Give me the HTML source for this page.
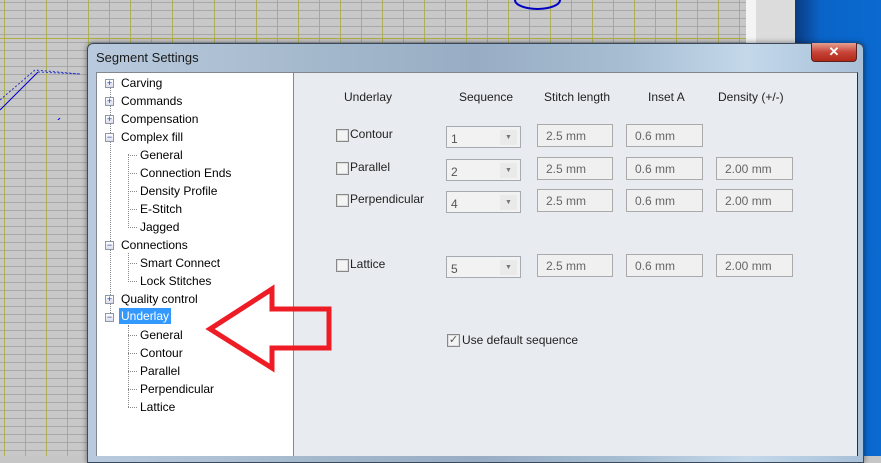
<!DOCTYPE html>
<html><head><style>
*{margin:0;padding:0;box-sizing:border-box}
body{width:881px;height:456px;overflow:hidden;position:relative;font-family:"Liberation Sans",sans-serif;background:#c6c6c6}
.canvas{position:absolute;left:0;top:0;width:746px;height:456px;background-color:#c8c8c8;
background-image:linear-gradient(90deg,rgba(170,170,60,.8) 1px,transparent 1px),linear-gradient(0deg,#a8a8a8 1px,transparent 1px);
background-size:21px 100%,100% 8px;background-position:4px 0,0 3px}
.hl{position:absolute;left:0;width:746px;height:1px;background:#b0b040}
.strip{position:absolute;left:746px;top:0;width:50px;height:456px;background:#dcdcdc;border-left:10px solid #f4f4f4}
.desk{position:absolute;left:795px;top:0;width:86px;height:456px;background:linear-gradient(90deg,#0a3a80,#0a64c8 30%,#0a6ad0)}
.dlg{position:absolute;left:87px;top:43px;width:777px;height:420px;border-radius:6px 6px 0 0;border:1px solid #3a4a5c;
background:linear-gradient(90deg,#b9cade,#a4b8cc 30%,#98adc4 50%,#a8bed2 70%,#c4d8ea 85%,#a8c0d8);box-shadow:0 0 6px rgba(0,0,0,.5)}
.title{position:absolute;left:8px;top:6px;font-size:13px;color:#1a1a1a;font-family:"Liberation Sans",sans-serif}
.close{position:absolute;left:723px;top:-1px;width:46px;height:19px;border:1px solid #5a2020;border-top:none;border-radius:0 0 4px 4px;background:linear-gradient(#e6a090,#c8453a 50%,#b02818);color:#fff;font-weight:bold;font-size:13px;text-align:center;line-height:17px}
.tree{position:absolute;left:96px;top:72px;width:198px;height:384px;background:#fff;border:1px solid #828790;border-bottom:none}
.right{position:absolute;left:294px;top:72px;width:564px;height:384px;background:#e8ebf0;border-top:1px solid #828790;border-right:1px solid #20304a}
.t{position:absolute;font-size:12px;color:#000;white-space:nowrap;line-height:14px}
.pb{position:absolute;width:9px;height:9px;border:1px solid #8a9aa8;background:linear-gradient(#fff,#dde);font-size:9px;line-height:7px;text-align:center;color:#2040a0}
.dv{position:absolute;border-left:1px dotted #888}
.dh{position:absolute;border-top:1px dotted #888;width:9px}
.l{position:absolute;font-size:12px;color:#222;white-space:nowrap}
.cb{position:absolute;width:13px;height:13px;border:1px solid #888;background:#f4f4f4;box-shadow:inset 0 0 0 1px #ddd}
.box{position:absolute;height:23px;border:1px solid #aaa;background:#f0f0f0;font-size:12px;color:#666;padding:4px 0 0 8px}
.combo{position:absolute;height:22px;width:75px;border:1px solid #a6abb3;background:#f2f2f2;font-size:12px;color:#555;padding:5px 0 0 4px}
.combo i{position:absolute;right:3px;top:3px;width:17px;height:15px;background:#eaeaea;font-style:normal;font-size:7px;color:#777;text-align:center;line-height:15px}
</style></head><body>
<div class="canvas"></div>
<div class="hl" style="top:38px"></div>
<div class="strip"></div>
<div class="desk"></div>
<svg style="position:absolute;left:0;top:0" width="746" height="120"><path d="M0 178 L60 118" stroke="#00f"/><path d="M0 100 L35 70 L80 74" stroke="#2030c0" fill="none" stroke-dasharray="2 2"/><path d="M515 0 A20 8 0 0 0 560 0" stroke="#0000c0" stroke-width="2" fill="none"/></svg>
<svg style="position:absolute;left:0;top:60px" width="90" height="60"><path d="M0 50 L38 12" stroke="#0000d0"/><path d="M38 12 L80 14" stroke="#3040d0" stroke-dasharray="2 2"/></svg>
<div class="dlg"><div class="title">Segment Settings</div><div class="close">✕</div></div>
<div class="tree">
<div class="dv" style="left:13px;top:13px;height:231px"></div>
<div class="dv" style="left:31px;top:81px;height:72px"></div>
<div class="dv" style="left:31px;top:180px;height:27px"></div>
<div class="dv" style="left:31px;top:252px;height:82px"></div>
</div>
<div class="right"></div>
<div id="tr"></div>
<svg style="position:absolute;left:200px;top:283px" width="140" height="95"><polygon points="10,46 72,6 72,26 129,26 129,65 72,65 72,85" fill="none" stroke="#ee1c24" stroke-width="5" stroke-linejoin="miter"/></svg>
<div class="l" style="left:344px;top:90px">Underlay</div>
<div class="l" style="left:459px;top:90px">Sequence</div>
<div class="l" style="left:544px;top:90px">Stitch length</div>
<div class="l" style="left:648px;top:90px">Inset A</div>
<div class="l" style="left:718px;top:90px">Density (+/-)</div>
<div class="cb" style="left:336px;top:129px"></div><div class="l" style="left:350px;top:127px">Contour</div>
<div class="cb" style="left:336px;top:162px"></div><div class="l" style="left:350px;top:160px">Parallel</div>
<div class="cb" style="left:336px;top:194px"></div><div class="l" style="left:350px;top:192px">Perpendicular</div>
<div class="cb" style="left:336px;top:259px"></div><div class="l" style="left:350px;top:257px">Lattice</div>
<div class="combo" style="left:446px;top:126px">1<i>▼</i></div>
<div class="combo" style="left:446px;top:159px">2<i>▼</i></div>
<div class="combo" style="left:446px;top:191px">4<i>▼</i></div>
<div class="combo" style="left:446px;top:256px">5<i>▼</i></div>
<div class="box" style="left:537px;top:124px;width:76px">2.5 mm</div>
<div class="box" style="left:537px;top:157px;width:76px">2.5 mm</div>
<div class="box" style="left:537px;top:189px;width:76px">2.5 mm</div>
<div class="box" style="left:537px;top:254px;width:76px">2.5 mm</div>
<div class="box" style="left:626px;top:124px;width:77px">0.6 mm</div>
<div class="box" style="left:626px;top:157px;width:77px">0.6 mm</div>
<div class="box" style="left:626px;top:189px;width:77px">0.6 mm</div>
<div class="box" style="left:626px;top:254px;width:77px">0.6 mm</div>
<div class="box" style="left:716px;top:157px;width:77px">2.00 mm</div>
<div class="box" style="left:716px;top:189px;width:77px">2.00 mm</div>
<div class="box" style="left:716px;top:254px;width:77px">2.00 mm</div>
<div class="cb" style="left:447px;top:334px;font-size:11px;line-height:11px;color:#555;text-align:center">✓</div><div class="l" style="left:462px;top:333px">Use default sequence</div>
<div class="pb" style="left:105px;top:79px">+</div><div class="t" style="left:121px;top:76px">Carving</div>
<div class="pb" style="left:105px;top:97px">+</div><div class="t" style="left:121px;top:94px">Commands</div>
<div class="pb" style="left:105px;top:115px">+</div><div class="t" style="left:121px;top:112px">Compensation</div>
<div class="pb" style="left:105px;top:133px">−</div><div class="t" style="left:121px;top:130px">Complex fill</div>
<div class="dh" style="left:128px;top:155px"></div><div class="t" style="left:140px;top:148px">General</div>
<div class="dh" style="left:128px;top:173px"></div><div class="t" style="left:140px;top:166px">Connection Ends</div>
<div class="dh" style="left:128px;top:191px"></div><div class="t" style="left:140px;top:184px">Density Profile</div>
<div class="dh" style="left:128px;top:209px"></div><div class="t" style="left:140px;top:202px">E-Stitch</div>
<div class="dh" style="left:128px;top:227px"></div><div class="t" style="left:140px;top:220px">Jagged</div>
<div class="pb" style="left:105px;top:241px">−</div><div class="t" style="left:121px;top:238px">Connections</div>
<div class="dh" style="left:128px;top:263px"></div><div class="t" style="left:140px;top:256px">Smart Connect</div>
<div class="dh" style="left:128px;top:281px"></div><div class="t" style="left:140px;top:274px">Lock Stitches</div>
<div class="pb" style="left:105px;top:295px">+</div><div class="t" style="left:121px;top:292px">Quality control</div>
<div class="pb" style="left:105px;top:313px">−</div><div class="t" style="left:119px;top:308px;background:#3399ff;color:#fff;padding:1px 2px">Underlay</div>
<div class="dh" style="left:128px;top:335px"></div><div class="t" style="left:140px;top:328px">General</div>
<div class="dh" style="left:128px;top:353px"></div><div class="t" style="left:140px;top:346px">Contour</div>
<div class="dh" style="left:128px;top:371px"></div><div class="t" style="left:140px;top:364px">Parallel</div>
<div class="dh" style="left:128px;top:389px"></div><div class="t" style="left:140px;top:382px">Perpendicular</div>
<div class="dh" style="left:128px;top:407px"></div><div class="t" style="left:140px;top:400px">Lattice</div>
</body></html>
